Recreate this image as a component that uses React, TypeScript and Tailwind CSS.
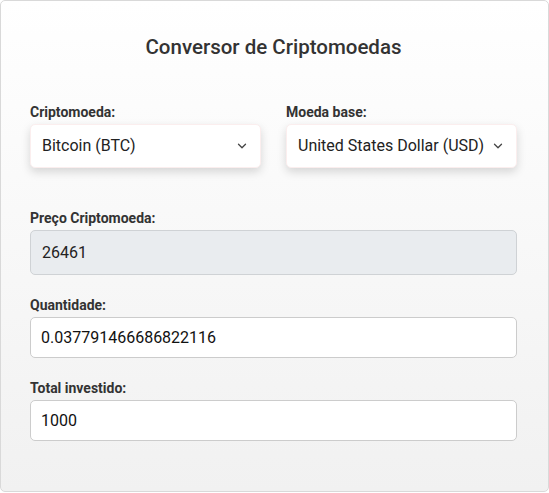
import { ChevronDown } from 'lucide-react';

function Label({ children }: { children: React.ReactNode }) {
  return <label className="block text-sm font-bold text-[#333] leading-5 mb-[2px]">{children}</label>;
}

function Select({ value }: { value: string }) {
  return (
    <div className="h-[44px] flex items-center justify-between pl-[11px] pr-[11px] bg-white rounded-[5px] border border-[#fbeeee] shadow-[0_4px_10px_rgba(0,0,0,0.15)] text-base text-[#222]">
      <span>{value}</span>
      <ChevronDown className="h-[14px] w-[14px] text-[#444]" strokeWidth={2.2} />
    </div>
  );
}

export default function App() {
  return (
    <div className="w-[549px] h-[493px] font-['Roboto',sans-serif]">
      <div className="h-[492px] border border-[#d9d9d9] rounded-[5px] bg-gradient-to-b from-white to-[#f1f1f1] pl-[29px] pr-[31px] pt-[32px]">
        <h1 className="text-[20.5px] leading-[28px] text-center text-[#333] font-medium">Conversor de Criptomoedas</h1>

        <div className="grid grid-cols-2 gap-[25px] mt-[41px]">
          <div>
            <Label>Criptomoeda:</Label>
            <Select value="Bitcoin (BTC)" />
          </div>
          <div>
            <Label>Moeda base:</Label>
            <Select value="United States Dollar (USD)" />
          </div>
        </div>

        <div className="mt-[40px]">
          <Label>Preço Criptomoeda:</Label>
          <div className="h-[45px] flex items-center px-[11px] bg-[#e9ecef] border border-[#cfd2d5] rounded-[5px] text-base text-[#222]">
            26461
          </div>
        </div>

        <div className="mt-[20px]">
          <Label>Quantidade:</Label>
          <input
            readOnly
            value="0.037791466686822116"
            className="block w-full h-[41px] px-[10px] bg-white border border-[#cccccc] rounded-[5px] text-base text-[#111] outline-none"
          />
        </div>

        <div className="mt-[20px]">
          <Label>Total investido:</Label>
          <input
            readOnly
            value="1000"
            className="block w-full h-[41px] px-[10px] bg-white border border-[#cccccc] rounded-[5px] text-base text-[#111] outline-none"
          />
        </div>
      </div>
    </div>
  );
}
